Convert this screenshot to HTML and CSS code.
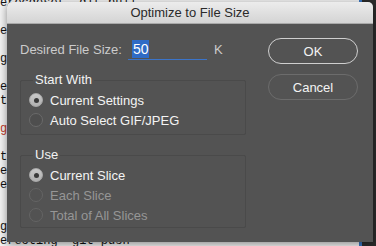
FILE: index.html
```html
<!DOCTYPE html>
<html lang="en">
<head>
  <meta charset="UTF-8">
  <title>Optimize to File Size</title>
  <link rel="stylesheet" href="styles.css">
</head>
<body>
  <pre class="terminal">erecdeset  git pull

e

g

e
t

<span class="err">g</span>

t
e
e


g
erecting  git push</pre>
  <div class="edge"></div>

  <div class="dialog">
    <div class="titlebar">Optimize to File Size</div>
    <div class="content">
      <div class="left">
        <div class="size-row">
          <label for="size">Desired File Size:</label>
          <div class="field" id="size"><span class="sel">50</span></div>
          <span class="unit">K</span>
        </div>

        <fieldset class="group">
          <legend>Start With</legend>
          <div class="radio on"><span class="dot"></span>Current Settings</div>
          <div class="radio"><span class="dot"></span>Auto Select GIF/JPEG</div>
        </fieldset>

        <fieldset class="group use">
          <legend>Use</legend>
          <div class="radio on"><span class="dot"></span>Current Slice</div>
          <div class="radio off"><span class="dot"></span>Each Slice</div>
          <div class="radio off"><span class="dot"></span>Total of All Slices</div>
        </fieldset>
      </div>

      <div class="buttons">
        <button class="btn default">OK</button>
        <button class="btn">Cancel</button>
      </div>
    </div>
  </div>
</body>
</html>
```

FILE: styles.css
```css
* {
  box-sizing: border-box;
}

body {
  margin: 0;
  width: 376px;
  height: 246px;
  overflow: hidden;
  position: relative;
  background: #f3f3f3;
  font-family: "Liberation Sans", Arial, sans-serif;
  font-size: 13px;
}

.terminal {
  margin: -4px 0 0 0;
  font-family: "Liberation Mono", monospace;
  font-size: 12px;
  line-height: 14px;
  color: #111;
}

.terminal .err {
  color: #c0392b;
}

.edge {
  position: absolute;
  top: 0;
  right: 0;
  width: 17px;
  height: 246px;
  background: #2c2c2c;
  border-left: 3px solid #3b78c4;
}

.dialog {
  position: absolute;
  left: 7px;
  top: 2px;
  width: 366px;
  height: 240px;
  background: #535353;
  border-radius: 5px 5px 0 0;
  box-shadow: 0 2px 8px rgba(0, 0, 0, 0.45);
  overflow: hidden;
}

.titlebar {
  height: 22px;
  line-height: 22px;
  text-align: center;
  color: #2a2a2a;
  background: linear-gradient(to bottom, #ececec, #d4d4d4);
  border-bottom: 1px solid #a9a9a9;
}

.content {
  display: flex;
  padding: 14px 0 0 13px;
  gap: 22px;
}

.left {
  width: 226px;
}

.size-row {
  display: flex;
  align-items: center;
  height: 21px;
  margin-top: 1px;
  color: #cbcbcb;
}

.field {
  margin-left: 6px;
  width: 79px;
  height: 21px;
  padding: 1px 0 0 4px;
  border-bottom: 1px solid #3b74c9;
}

.sel {
  display: inline-block;
  height: 18px;
  line-height: 18px;
  padding: 0 1px;
  background: #2f6bc6;
  color: #fff;
  font-size: 14px;
}

.unit {
  margin-left: 7px;
}

.group {
  margin: 12px 0 0;
  padding: 2px 0 4px;
  border: 1px solid #4a4a4a;
  border-radius: 2px;
}

.group.use {
  margin-top: 12px;
  padding-bottom: 2px;
}

.group legend {
  margin-left: 12px;
  padding: 0 2px;
  line-height: 16px;
  color: #f2f2f2;
}

.radio {
  display: flex;
  align-items: center;
  height: 20px;
  padding-left: 8px;
  color: #f4f4f4;
}

.radio .dot {
  width: 14px;
  height: 14px;
  margin-right: 7px;
  border-radius: 50%;
  border: 1px solid #6a6a6a;
  background: #4e4e4e;
  display: flex;
  align-items: center;
  justify-content: center;
}

.radio.on .dot {
  border-color: #a8a8a8;
  background: linear-gradient(to bottom, #c9c9c9, #b0b0b0);
}

.radio.on .dot::after {
  content: "";
  width: 5px;
  height: 5px;
  border-radius: 50%;
  background: #3a3a3a;
}

.radio.off {
  color: #969696;
}

.radio.off .dot {
  border-color: #646464;
  background: #525252;
}

.buttons {
  display: flex;
  flex-direction: column;
  gap: 10px;
}

.btn {
  width: 90px;
  height: 26px;
  border-radius: 13px;
  border: 1px solid #6c6c6c;
  background: transparent;
  color: #f3f3f3;
  font-family: "Liberation Sans", Arial, sans-serif;
  font-size: 13px;
  padding: 0;
}

.btn.default {
  border: 1.5px solid #cfcfcf;
}
```
